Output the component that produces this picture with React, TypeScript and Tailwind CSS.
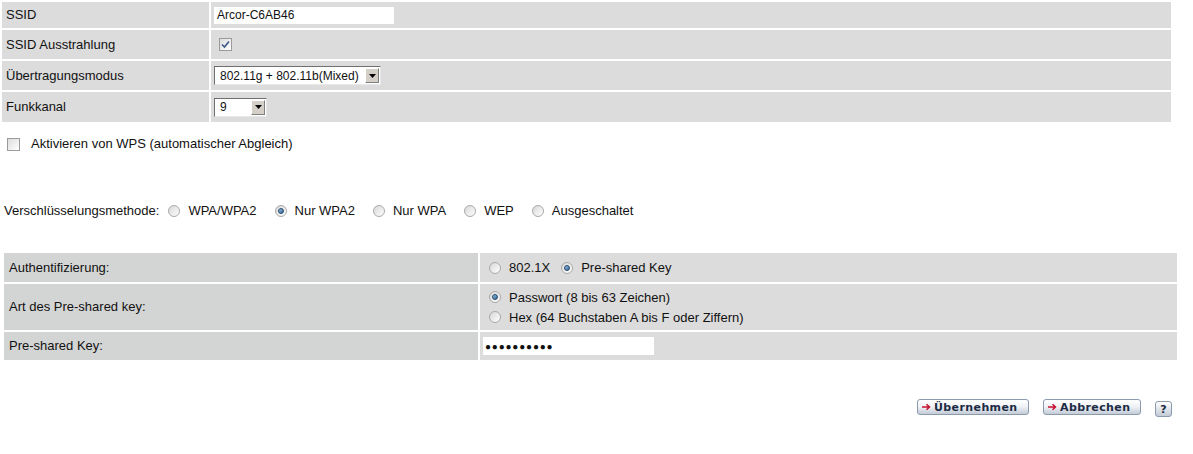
import React from "react";

const Radio = ({ checked = false }: { checked?: boolean }) => (
  <span className="relative inline-flex h-[12px] w-[12px] shrink-0 items-center justify-center rounded-full border border-[#a9a9a9] bg-gradient-to-br from-[#d8d8d8] to-white">
    {checked && (
      <span className="h-[6px] w-[6px] rounded-full border border-[#24486c] bg-gradient-to-br from-[#9ec6e8] to-[#2f5f8f]"></span>
    )}
  </span>
);

const Checkbox = ({ checked = false }: { checked?: boolean }) => (
  <span className="inline-flex h-[13px] w-[13px] shrink-0 items-center justify-center border border-[#9a9a9a] bg-gradient-to-br from-[#dcdcdc] to-white">
    {checked && (
      <svg width="9" height="9" viewBox="0 0 9 9">
        <path d="M1 4.5 L3.5 7 L8 1.5" fill="none" stroke="#3a5a8a" strokeWidth="1.6" />
      </svg>
    )}
  </span>
);

const Select = ({ value, width }: { value: string; width: string }) => (
  <span
    className={`inline-flex h-[19px] items-stretch border border-t-[#6f6f6f] border-l-[#6f6f6f] border-r-[#e8e8e8] border-b-[#e8e8e8] bg-white ${width}`}
  >
    <span className="flex flex-1 items-center pl-[5px] text-[12px] leading-none">{value}</span>
    <span className="m-[1px] flex w-[14px] items-center justify-center border border-t-white border-l-white border-r-[#808080] border-b-[#808080] bg-[#d4d0c8]">
      <svg width="7" height="4" viewBox="0 0 7 4">
        <path d="M0 0 H7 L3.5 4 Z" fill="#000" />
      </svg>
    </span>
  </span>
);

const Option = ({ checked = false, label }: { checked?: boolean; label: string }) => (
  <span className="inline-flex items-center gap-[8px]">
    <Radio checked={checked} />
    <span>{label}</span>
  </span>
);

const Button = ({ label, width }: { label: string; width: string }) => (
  <button
    className={`flex h-[16px] items-center gap-[3px] rounded-[3px] border border-[#8c9aad] bg-gradient-to-b from-white via-[#eef1f5] to-[#c3cbd6] pl-[4px] font-['DejaVu_Sans',sans-serif] text-[11px] font-bold leading-none tracking-[0.4px] text-[#1c2b44] ${width}`}
  >
    <svg width="9" height="8" viewBox="0 0 9 8">
      <path d="M0 4 H7 M4.5 1.2 L7.5 4 L4.5 6.8" fill="none" stroke="#c8102e" strokeWidth="1.5" />
    </svg>
    {label}
  </button>
);

export default function App() {
  return (
    <div className="h-[454px] w-[1193px] bg-white font-['Liberation_Sans',Arial,sans-serif] text-[13px] text-[#111]">
      {/* WLAN basics */}
      <div className="flex w-[1171px] flex-col gap-[2px] pl-[2px] pt-[2px]">
        <div className="grid h-[26px] grid-cols-[207px_1fr] gap-[2px]">
          <div className="flex items-center bg-[#dcdcdc] pl-[4px]">SSID</div>
          <div className="flex items-center bg-[#dcdcdc] pl-[3px]">
            <span className="flex h-[17px] w-[180px] items-center bg-white pl-[3px] text-[12px]">Arcor-C6AB46</span>
          </div>
        </div>
        <div className="grid h-[29px] grid-cols-[207px_1fr] gap-[2px]">
          <div className="flex items-center bg-[#dcdcdc] pl-[4px]">SSID Ausstrahlung</div>
          <div className="flex items-center bg-[#dcdcdc] pl-[8px]">
            <Checkbox checked />
          </div>
        </div>
        <div className="grid h-[29px] grid-cols-[207px_1fr] gap-[2px]">
          <div className="flex items-center bg-[#dcdcdc] pl-[4px]">Übertragungsmodus</div>
          <div className="flex items-center bg-[#dcdcdc] pl-[3px]">
            <Select value="802.11g + 802.11b(Mixed)" width="w-[167px]" />
          </div>
        </div>
        <div className="grid h-[30px] grid-cols-[207px_1fr] gap-[2px]">
          <div className="flex items-center bg-[#dcdcdc] pl-[4px]">Funkkanal</div>
          <div className="flex items-center bg-[#dcdcdc] pl-[3px]">
            <Select value="9" width="w-[53px]" />
          </div>
        </div>
      </div>

      {/* WPS */}
      <div className="mt-[12px] flex h-[20px] items-center gap-[11px] pl-[7px]">
        <Checkbox />
        <span>Aktivieren von WPS (automatischer Abgleich)</span>
      </div>

      {/* Encryption */}
      <div className="mt-[47px] flex h-[20px] items-center gap-[18px] pl-[4px]">
        <span className="mr-[-9px]">Verschlüsselungsmethode:</span>
        <Option label="WPA/WPA2" />
        <Option checked label="Nur WPA2" />
        <Option label="Nur WPA" />
        <Option label="WEP" />
        <Option label="Ausgeschaltet" />
      </div>

      {/* Security table */}
      <div className="mt-[32px] flex w-[1177px] flex-col gap-[2px] pl-[4px]">
        <div className="grid h-[29px] grid-cols-[474px_1fr] gap-[2px]">
          <div className="flex items-center bg-[#d3d5d4] pl-[5px]">Authentifizierung:</div>
          <div className="flex items-center gap-[11px] bg-[#dcdcdc] pl-[9px]">
            <Option label="802.1X" />
            <Option checked label="Pre-shared Key" />
          </div>
        </div>
        <div className="grid h-[46px] grid-cols-[474px_1fr] gap-[2px]">
          <div className="flex items-center bg-[#d3d5d4] pl-[5px]">Art des Pre-shared key:</div>
          <div className="flex flex-col justify-center gap-[5px] bg-[#dcdcdc] pl-[9px] leading-[15px]">
            <Option checked label="Passwort (8 bis 63 Zeichen)" />
            <Option label="Hex (64 Buchstaben A bis F oder Ziffern)" />
          </div>
        </div>
        <div className="grid h-[28px] grid-cols-[474px_1fr] gap-[2px]">
          <div className="flex items-center bg-[#d3d5d4] pl-[5px]">Pre-shared Key:</div>
          <div className="flex items-center bg-[#dcdcdc] pl-[3px]">
            <span className="flex h-[18px] w-[171px] items-center bg-white pl-[2px] text-[10px] tracking-[0.8px]">
              ●●●●●●●●●●
            </span>
          </div>
        </div>
      </div>

      {/* Actions */}
      <div className="mt-[39px] flex w-[1172px] items-start justify-end">
        <Button label="Übernehmen" width="w-[112px]" />
        <div className="ml-[14px]">
          <Button label="Abbrechen" width="w-[98px]" />
        </div>
        <button className="ml-[14px] mt-[2px] flex h-[16px] w-[17px] items-center justify-center rounded-[3px] border border-[#8c9aad] bg-gradient-to-b from-white to-[#c3cbd6] font-['DejaVu_Sans',sans-serif] text-[11px] font-bold leading-none text-[#1c2b44]">
          ?
        </button>
      </div>
    </div>
  );
}
